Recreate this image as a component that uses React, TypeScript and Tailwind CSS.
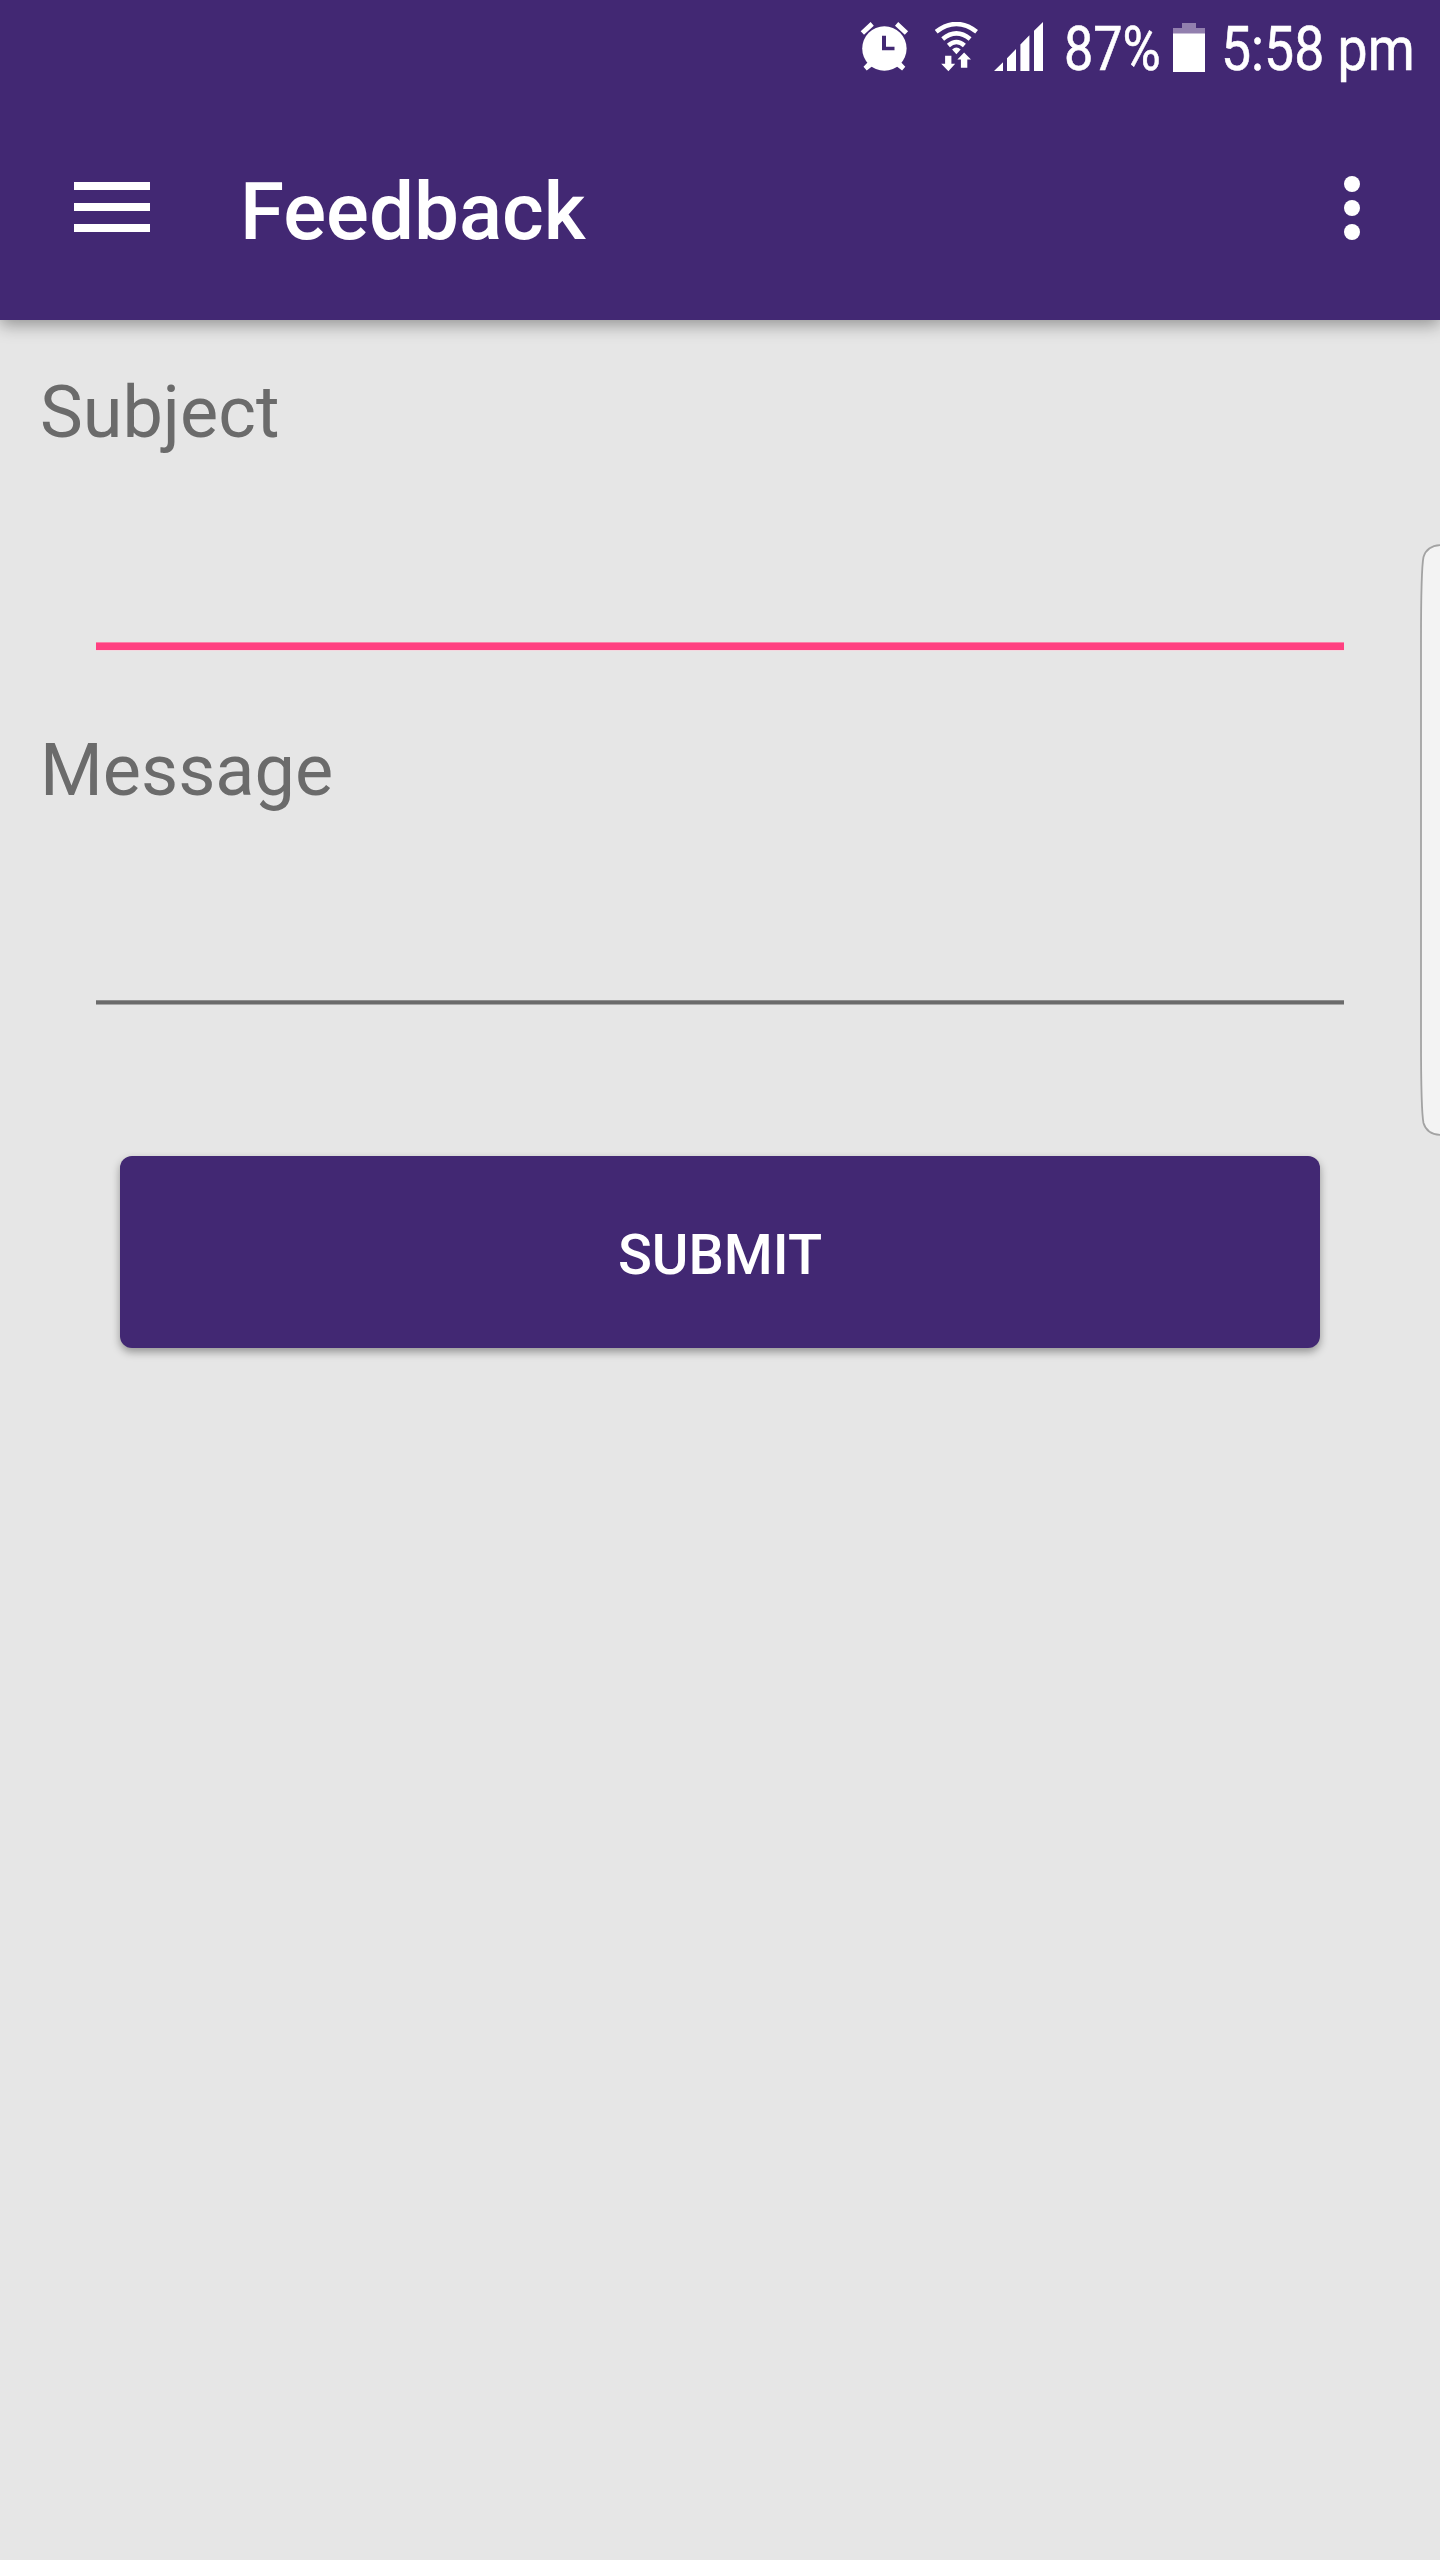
import React from 'react';

function AlarmIcon() {
  return (
    <svg className="h-[50px] w-[50px] shrink-0" viewBox="0.6 0 50 50" fill="#fff">
      <circle cx="25" cy="26.500" r="22.200" />
      <path d="M1.300 9.200 11.200 0l3.200 3.700-9.800 9.100zM48.700 9.200 38.800 0l-3.200 3.700 9.800 9.100z" />
      <path d="M10 38.500l4.500 4.500-7.200 5.400-3.200-3.700zM40 38.500l-4.500 4.500 7.200 5.400 3.200-3.700z" />
      <path d="M22.600 13.800h4V24.700h8.500v3.600H22.600z" fill="#422873" />
    </svg>
  );
}

function WifiIcon() {
  return (
    <svg className="h-[50px] w-[44px] shrink-0" viewBox="0.600 0 44 50" fill="none">
      <g stroke="#fff" strokeWidth="4.500">
        <path d="M1.800 9.700Q22-5.700 42.200 9.700" />
        <path d="M8.300 17Q22 5.800 35.700 17" />
        <path d="M14 23.500Q22 16.500 30 23.500" />
      </g>
      <path d="M22 32.200l-4.300-4.600Q22 23.500 26.300 27.600z" fill="#fff" />
      <path d="M10.700 33.800h6.300v8h3.800L14 49.300 6.800 41.800h3.900zM26.500 45.800h6.400v-8.400h3.700L29.700 30.500l-6.700 6.900h3.500z" fill="#fff" />
    </svg>
  );
}

function SignalIcon() {
  return (
    <svg className="h-[50px] w-[50px] shrink-0" viewBox="0 0 50 50" fill="#fff">
      <path d="M0 49 9 40.300V49zM13 36.200 22 27V49H13zM26.400 22.600 35.400 13.300V49H26.400zM40 8.700 49 0V49H40z" />
    </svg>
  );
}

function BatteryIcon() {
  return (
    <svg className="h-[49px] w-[32px] shrink-0" viewBox="0 0 32 49">
      <path d="M9 0h14v5h9v6H0V5h9z" fill="#927fae" />
      <path d="M0 10.500h32V49H0z" fill="#fff" />
    </svg>
  );
}

function Field({ label, focused = false }: { label: string; focused?: boolean }) {
  return (
    <div className="h-[358px]">
      <div className="ml-10 text-[72px] leading-[84px] text-[#6b6b6b]">{label}</div>
      <div className="mx-24 flex h-[196px] flex-col justify-end">
        {focused ? (
          <div className="h-[9px] border-t border-b border-t-[#fb81a8] border-b-[#f4d7df] bg-[#ff4081]" />
        ) : (
          <div className="mb-1 h-[5px] border-y border-t-[#8d8d8d] border-b-[#a7a7a7] bg-[#6b6b6b]" />
        )}
      </div>
    </div>
  );
}

export default function App() {
  return (
    <div className="relative h-[2560px] w-[1440px] overflow-hidden bg-[#e6e6e6] font-[Roboto,sans-serif]">
      <header className="relative h-[320px] bg-[#422873] text-white shadow-[0_5px_16px_rgba(0,0,0,0.36)]">
        <div className="flex h-24 items-start pt-[22px] pl-[860px]">
          <AlarmIcon />
          <div className="ml-[25px]">
            <WifiIcon />
          </div>
          <div className="ml-[15px]">
            <SignalIcon />
          </div>
          <div className="ml-[20px] w-[98px] whitespace-nowrap text-[61px] leading-[54px] [-webkit-text-stroke:0.6px_white]">
            <span className="inline-block origin-left scale-x-[0.855]">87%</span>
          </div>
          <div className="mt-[1px] ml-[11px]">
            <BatteryIcon />
          </div>
          <div className="ml-[16px] w-[200px] whitespace-nowrap text-[61px] leading-[54px] [-webkit-text-stroke:0.6px_white]">
            <span className="inline-block origin-left scale-x-[0.878]">5:58 pm</span>
          </div>
        </div>
        <div className="flex h-[224px] items-start">
          <button aria-label="Menu" className="mt-[86px] ml-[74px] flex w-[76px] flex-col gap-[13px]">
            <span className="h-2 bg-white" />
            <span className="h-2 bg-white" />
            <span className="h-2 bg-white" />
          </button>
          <h1 className="mt-[68px] ml-[90px] text-[80px] leading-[96px] font-medium">Feedback</h1>
          <button aria-label="More options" className="mt-20 mr-20 ml-auto flex flex-col gap-2">
            <span className="size-4 rounded-full bg-white" />
            <span className="size-4 rounded-full bg-white" />
            <span className="size-4 rounded-full bg-white" />
          </button>
        </div>
      </header>
      <main className="pt-[51px]">
        <Field label="Subject" focused />
        <Field label="Message" />
        <button className="mx-[120px] mt-[69px] flex h-48 w-[1200px] items-center justify-center rounded-[12px] bg-[#422873] pt-[6px] text-[56px] leading-[66px] font-medium text-white shadow-[0_4px_9px_rgba(0,0,0,0.36)]">
          SUBMIT
        </button>
      </main>
      <svg className="absolute top-[542px] right-0 h-[596px] w-[22px]" viewBox="0 0 22 596">
        <path
          d="M24 3Q9 3 5.500 15Q3 27 3 100V496Q3 569 5.500 581Q9 593 24 593"
          fill="#f3f3f3"
          stroke="#a3a3a3"
          strokeWidth="1.800"
        />
      </svg>
    </div>
  );
}
